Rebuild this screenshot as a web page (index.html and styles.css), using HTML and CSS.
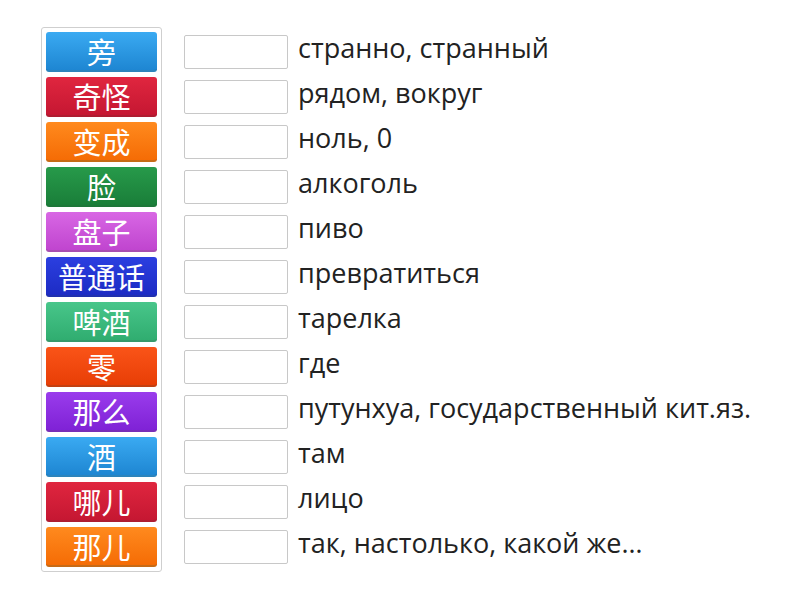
FILE: index.html
```html
<!DOCTYPE html>
<html lang="ru">

<head>
  <meta charset="UTF-8">
  <title>Сопоставление</title>
  <link rel="stylesheet" href="styles.css">
</head>

<body>

  <div class="game">
    <div class="tiles">
      <div class="tile blue">旁</div>
      <div class="tile red">奇怪</div>
      <div class="tile orange">变成</div>
      <div class="tile green">脸</div>
      <div class="tile pink">盘子</div>
      <div class="tile navy">普通话</div>
      <div class="tile mint">啤酒</div>
      <div class="tile scarlet">零</div>
      <div class="tile violet">那么</div>
      <div class="tile blue">酒</div>
      <div class="tile red">哪儿</div>
      <div class="tile orange">那儿</div>
    </div>

    <ul class="answers">
      <li><span class="slot"></span><span class="text">странно, странный</span></li>
      <li><span class="slot"></span><span class="text">рядом, вокруг</span></li>
      <li><span class="slot"></span><span class="text">ноль, 0</span></li>
      <li><span class="slot"></span><span class="text">алкоголь</span></li>
      <li><span class="slot"></span><span class="text">пиво</span></li>
      <li><span class="slot"></span><span class="text">превратиться</span></li>
      <li><span class="slot"></span><span class="text">тарелка</span></li>
      <li><span class="slot"></span><span class="text">где</span></li>
      <li><span class="slot"></span><span class="text">путунхуа, государственный кит.яз.</span></li>
      <li><span class="slot"></span><span class="text">там</span></li>
      <li><span class="slot"></span><span class="text">лицо</span></li>
      <li><span class="slot"></span><span class="text">так, настолько, какой же…</span></li>
    </ul>
  </div>

</body>

</html>
```

FILE: styles.css
```css
body {
  margin: 0;
  padding: 0;
  background-color: #fff;
  font-family: 'Open Sans', 'Noto Sans', sans-serif;
}

.game {
  display: flex;
  align-items: flex-start;
  padding: 27px 0 0 41px;
}

.tiles {
  display: flex;
  flex-direction: column;
  gap: 5px;
  padding: 4px;
  border: 1px solid #cfcfcf;
  border-radius: 3px;
}

.tile {
  width: 111px;
  height: 40px;
  box-sizing: border-box;
  border-radius: 3px;
  color: #fff;
  font-family: 'Noto Sans CJK SC', sans-serif;
  font-size: 29px;
  line-height: 38px;
  text-align: center;
  border-bottom: 2px solid rgba(0, 0, 0, 0.22);
}

.blue { background: linear-gradient(#3aaaf2, #1e86d2); }
.red { background: linear-gradient(#e0263f, #c51732); }
.orange { background: linear-gradient(#ff8a1e, #f56c05); }
.green { background: linear-gradient(#279a4a, #1a7e39); }
.pink { background: linear-gradient(#d867e4, #c045cf); }
.navy { background: linear-gradient(#2b3fe0, #1d2cc4); }
.mint { background: linear-gradient(#48c68a, #30ad70); }
.scarlet { background: linear-gradient(#fa5418, #e83e06); }
.violet { background: linear-gradient(#9a3cec, #7f22d6); }

.answers {
  list-style: none;
  margin: 5px 0 0 22px;
  padding: 0;
  display: flex;
  flex-direction: column;
  gap: 5px;
}

.answers li {
  height: 40px;
  display: flex;
  align-items: center;
  font-size: 27px;
  line-height: 1;
  color: #222;
}

.text {
  margin-bottom: 10px;
  white-space: nowrap;
}

.slot {
  flex: none;
  width: 104px;
  height: 34px;
  box-sizing: border-box;
  border: 1px solid #c8c8c8;
  border-radius: 2px;
  margin-right: 10px;
}
```
